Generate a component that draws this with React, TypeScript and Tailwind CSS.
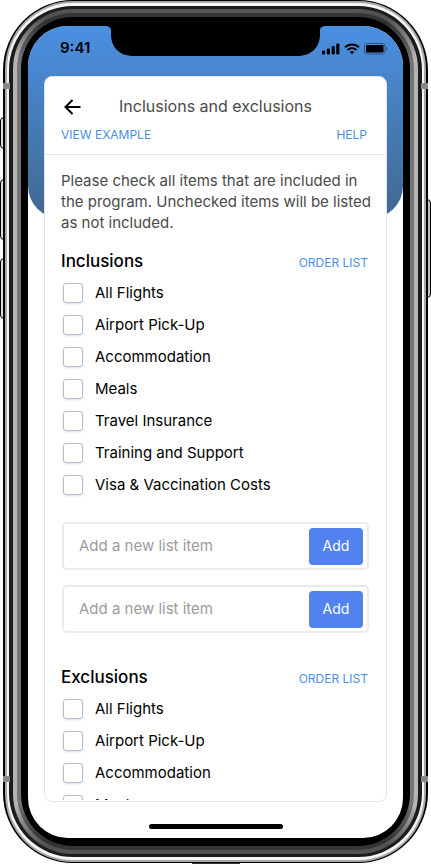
import { ReactNode } from "react";

const inclusions = [
  "All Flights",
  "Airport Pick-Up",
  "Accommodation",
  "Meals",
  "Travel Insurance",
  "Training and Support",
  "Visa & Vaccination Costs",
];

function StatusBar() {
  return (
    <div className="relative flex h-[50px] shrink-0 items-start justify-between pl-8 pr-[15px]">
      <div className="absolute left-20 right-20 top-0 flex justify-center">
        <svg className="absolute -left-1 top-0" width="32" height="30" viewBox="0 0 32 30" aria-hidden="true">
          <path d="M0 0C3 0 7 0 7 5V8C7 21 15 30 30 30H32V0Z" />
        </svg>
        <div className="mx-7 h-[30px] flex-1 bg-black" />
        <svg className="absolute -right-1 top-0" width="32" height="30" viewBox="0 0 32 30" aria-hidden="true">
          <path d="M32 0C29 0 25 0 25 5V8C25 21 17 30 2 30H0V0Z" />
        </svg>
      </div>
      <span className="mt-3 text-[15px] font-semibold leading-5">9:41</span>
      <div className="mt-[17px] flex items-center gap-1">
        <svg width="18" height="12" viewBox="0 0 18 12" aria-hidden="true">
          <rect x="0" y="7.5" width="3.2" height="4" rx="1.2" />
          <rect x="4.8" y="5.5" width="3.2" height="6" rx="1.2" />
          <rect x="9.6" y="3" width="3.2" height="8.5" rx="1.2" />
          <rect x="14.2" y="0.5" width="3.2" height="11" rx="1.2" />
        </svg>
        <svg width="16" height="12" viewBox="0 0 16 12" fill="none" stroke="black" strokeWidth="1.9" aria-hidden="true">
          <path d="M1 4.3a10 10 0 0 1 14 0M3.6 7a6.2 6.2 0 0 1 8.8 0" />
          <path d="M8 11.2 5.8 9a3.2 3.2 0 0 1 4.4 0Z" fill="black" stroke="none" />
        </svg>
        <svg width="24" height="12" viewBox="0 0 24 12" aria-hidden="true">
          <rect x="0.5" y="0.5" width="20.5" height="10.5" rx="2.6" fill="none" stroke="black" strokeOpacity="0.4" />
          <rect x="2" y="2" width="17.5" height="7.5" rx="1.3" />
          <path d="M22.3 4v3.6c.7-.3 1.2-1 1.2-1.8s-.5-1.5-1.2-1.8Z" fillOpacity="0.4" />
        </svg>
      </div>
    </div>
  );
}

function TextLink({ children }: { children: ReactNode }) {
  return (
    <a href="#" className="text-xs leading-4 text-[#4a90e2]">
      {children}
    </a>
  );
}

function CheckList({ title, items }: { title: string; items: string[] }) {
  return (
    <section>
      <div className="flex items-baseline justify-between pr-0.5">
        <h2 className="text-[17px] font-medium leading-6">{title}</h2>
        <TextLink>ORDER LIST</TextLink>
      </div>
      <ul className="mt-1 pl-0.5">
        {items.map((item) => (
          <li key={item}>
            <label className="flex h-8 items-center gap-3 text-[15px]">
              <input
                type="checkbox"
                className="size-5 appearance-none rounded-[3px] border border-[#b4c0ce] bg-white shadow-sm checked:bg-[#5282f0]"
              />
              {item}
            </label>
          </li>
        ))}
      </ul>
    </section>
  );
}

function AddItem() {
  return (
    <form
      className="flex h-12 items-center rounded-[5px] border-2 border-[#ebebeb] pl-[15px] pr-1"
      onSubmit={(e) => e.preventDefault()}
    >
      <input
        type="text"
        aria-label="Add a new list item"
        placeholder="Add a new list item"
        className="min-w-0 flex-1 text-[15px] outline-none placeholder:text-[#9b9b9b]"
      />
      <button type="submit" className="h-[37px] w-[54px] rounded bg-[#5282f0] text-sm text-white">
        Add
      </button>
    </form>
  );
}

function PhoneFrame({ children }: { children: ReactNode }) {
  return (
    <div className="relative h-screen overflow-hidden bg-white px-[3px] pb-px">
      {/* side buttons */}
      <div className="absolute left-0 top-[117px] h-8 w-2 rounded-l-sm border border-black bg-[#ddd]" />
      <div className="absolute left-0 top-[179px] h-[61px] w-2 rounded-l-sm border border-black bg-[#ddd]" />
      <div className="absolute left-0 top-[258px] h-[61px] w-2 rounded-l-sm border border-black bg-[#ddd]" />
      <div className="absolute right-0 top-[199px] h-[99px] w-2 rounded-r-sm border border-black bg-[#c4c4c4]" />
      <div className="absolute inset-x-0 bottom-0 mx-auto h-1 w-12 bg-[#333]" />
      {/* steel rim, then the glass edge */}
      <div className="relative h-full rounded-[70px] bg-black px-0.5 py-px">
        <div className="h-full rounded-[68px] bg-[#a8a8a8] px-0.5 py-0.5">
          <div className="h-full rounded-[66px] bg-[#f6f6f6] px-0.5 py-[3px]">
            <div className="h-full rounded-[64px] bg-[#1c1c1c] px-1 py-[3px]">
              <div className="h-full rounded-[60px] bg-[linear-gradient(#555_0,#505050_8px,#b4b4b4_48px,#b4b4b4_calc(100%-48px),#505050_calc(100%-8px),#555_100%)] p-1">
                <div className="h-full rounded-[56px] bg-[linear-gradient(#383838_0,#303030_8px,#747474_48px,#747474_calc(100%-48px),#303030_calc(100%-8px),#383838_100%)] p-1">
                  <div className="h-full rounded-[52px] bg-black px-[7px] pb-2 pt-[9px]">{children}</div>
                </div>
              </div>
            </div>
          </div>
        </div>
      </div>
      {/* antenna bands */}
      <div className="absolute left-[3px] top-[83px] h-1.5 w-[7px] bg-[#888]" />
      <div className="absolute right-[3px] top-[83px] h-1.5 w-[7px] bg-[#888]" />
      <div className="absolute bottom-[82px] left-[3px] h-1.5 w-[7px] bg-[#888]" />
      <div className="absolute bottom-[82px] right-[3px] h-1.5 w-[7px] bg-[#888]" />
    </div>
  );
}

export default function App() {
  return (
    <PhoneFrame>
      <div className="relative flex h-full flex-col overflow-hidden rounded-[40px] bg-white font-['Inter',sans-serif] text-black">
        <div className="absolute inset-x-0 top-0 h-[192px] rounded-b-[32px] bg-linear-to-b from-[#4a90e2] to-[#41688f]" />
        <StatusBar />
        <main className="relative mx-4 flex min-h-0 flex-1 flex-col overflow-hidden rounded-lg border border-[#e4e4e4] bg-white">
          <header className="shrink-0 border-b border-[#e4e4e4] px-4 pb-[11px] pt-[15px]">
            <div className="relative flex h-7 items-center justify-center">
              <button type="button" aria-label="Back" className="absolute left-0">
                <svg width="24" height="24" viewBox="0 0 24 24" fill="none" stroke="black" strokeWidth="2" aria-hidden="true">
                  <path d="M19.5 13H4.5M11.5 6l-7 7 7 7" />
                </svg>
              </button>
              <h1 className="text-base text-[#4a4a4a]">Inclusions and exclusions</h1>
            </div>
            <div className="mt-[7px] flex justify-between pr-[3px]">
              <TextLink>VIEW EXAMPLE</TextLink>
              <TextLink>HELP</TextLink>
            </div>
          </header>
          <div className="mb-px min-h-0 flex-1 overflow-hidden px-4 pt-[15px]">
            <p className="-mr-3 mb-4 text-[15px] leading-[21px] text-[#4a4a4a]">
              Please check all items that are included in the program. Unchecked items will be listed as not included.
            </p>
            <CheckList title="Inclusions" items={inclusions} />
            <div className="mx-px mb-8 mt-[21px] flex flex-col gap-[15px]">
              <AddItem />
              <AddItem />
            </div>
            <CheckList title="Exclusions" items={inclusions} />
          </div>
        </main>
        <div className="relative flex h-9 shrink-0 items-end justify-center pb-[9px]">
          <div className="h-[5px] w-[134px] rounded-full bg-black" />
        </div>
      </div>
    </PhoneFrame>
  );
}
